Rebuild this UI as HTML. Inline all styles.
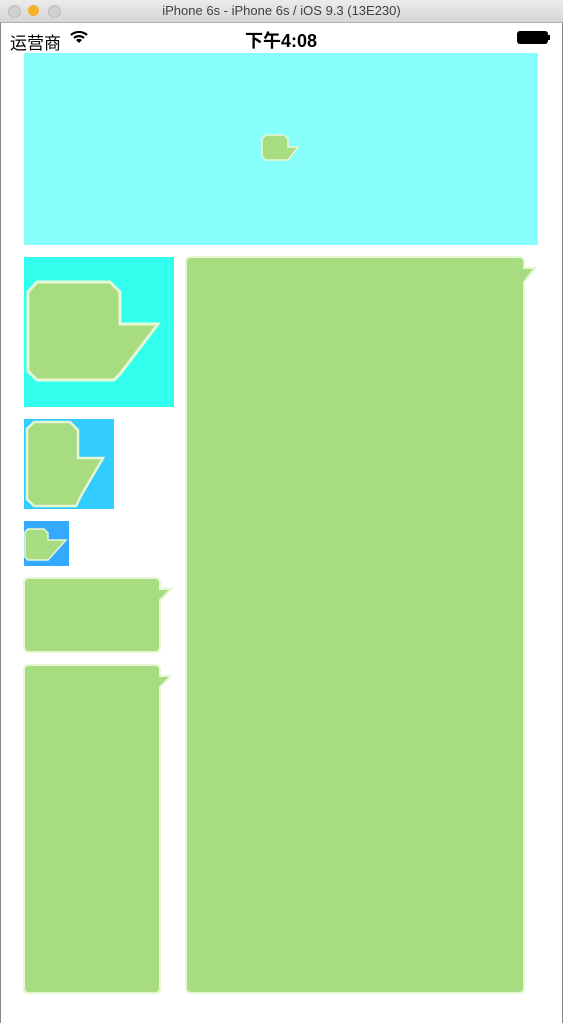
<!DOCTYPE html>
<html><head><meta charset="utf-8"><style>
body{margin:0;width:563px;height:1023px;overflow:hidden;background:#fff;font-family:"Liberation Sans","Noto Sans CJK SC",sans-serif}
.tb{position:absolute;left:0;top:0;width:563px;height:22px;background:linear-gradient(#ececec,#d6d6d6);border-bottom:1px solid #b0b0b0;text-align:center;font-size:13px;line-height:22px;color:#404040}
.d{position:absolute;top:5px;width:12px;height:12px;border-radius:50%}
</style></head><body>
<div class="tb">iPhone 6s - iPhone 6s / iOS 9.3 (13E230)
<div class="d" style="left:8px;background:#d0d0d0;border:1px solid #bbb;width:11px;height:11px"></div>
<div class="d" style="left:28px;background:#f5b128;width:11px;height:11px"></div>
<div class="d" style="left:48px;background:#d0d0d0;border:1px solid #bbb;width:11px;height:11px"></div>
</div>
<div style="position:absolute;left:0;top:23px;width:1px;height:1000px;background:#888"></div>
<div style="position:absolute;right:0;top:23px;width:1px;height:1000px;background:#888"></div>
<div style="position:absolute;left:10px;top:29px;font-size:17px;color:#000">运营商</div>
<svg style="position:absolute;left:69px;top:29px" width="20" height="16" viewBox="0 0 20 16"><path d="M2 6 A12 12 0 0 1 18 6" fill="none" stroke="#000" stroke-width="2.2"/><path d="M5 9 A7.5 7.5 0 0 1 15 9" fill="none" stroke="#000" stroke-width="2.2"/><path d="M10 14 L7 11 A4.5 4.5 0 0 1 13 11Z" fill="#000"/></svg>
<div style="position:absolute;left:245px;top:27px;font-size:18px;font-weight:bold;color:#000">下午4:08</div>
<div style="position:absolute;left:517px;top:31px;width:31px;height:13px;border-radius:3px;background:#000"></div>
<div style="position:absolute;left:548px;top:35px;width:2px;height:5px;background:#000"></div>
<svg style="position:absolute;left:0;top:0" width="563" height="1023">
<g stroke="#e6f7d6" stroke-width="1.5" fill="#a8dc80">
<rect x="24" y="53" width="514" height="192" fill="#88fffb" stroke="none"/>
<path d="M266 135H284L288 139V147H298L288 160H266L262 156V139Z"/>
<rect x="24" y="257" width="150" height="150" fill="#33ffee" stroke="none"/>
<path d="M37 282H110L120 292V324H158L120 374L114 380H37L28 371V292Z" stroke-width="3"/>
<rect x="24" y="419" width="90" height="90" fill="#33ccff" stroke="none"/>
<path d="M34 422H70L78 430V458H103L82 494L76 506H34L27 499V429Z" stroke-width="2.5"/>
<rect x="24" y="521" width="45" height="45" fill="#33aaff" stroke="none"/>
<path d="M28 529H44L48 533V540H66L48 560H28L25 557V532Z" stroke-width="1.5"/>
<path d="M29 578H155Q160 578 160 583V589H171L160 600V647Q160 652 155 652H29Q24 652 24 647V583Q24 578 29 578Z" stroke-width="2"/>
<path d="M29 665H155Q160 665 160 670V676H171L160 687V988Q160 993 155 993H29Q24 993 24 988V670Q24 665 29 665Z" stroke-width="2"/>
<path d="M191 257H519Q524 257 524 262V268H535L524 282V988Q524 993 519 993H191Q186 993 186 988V262Q186 257 191 257Z" stroke-width="2"/>
</g></svg>
</body></html>
